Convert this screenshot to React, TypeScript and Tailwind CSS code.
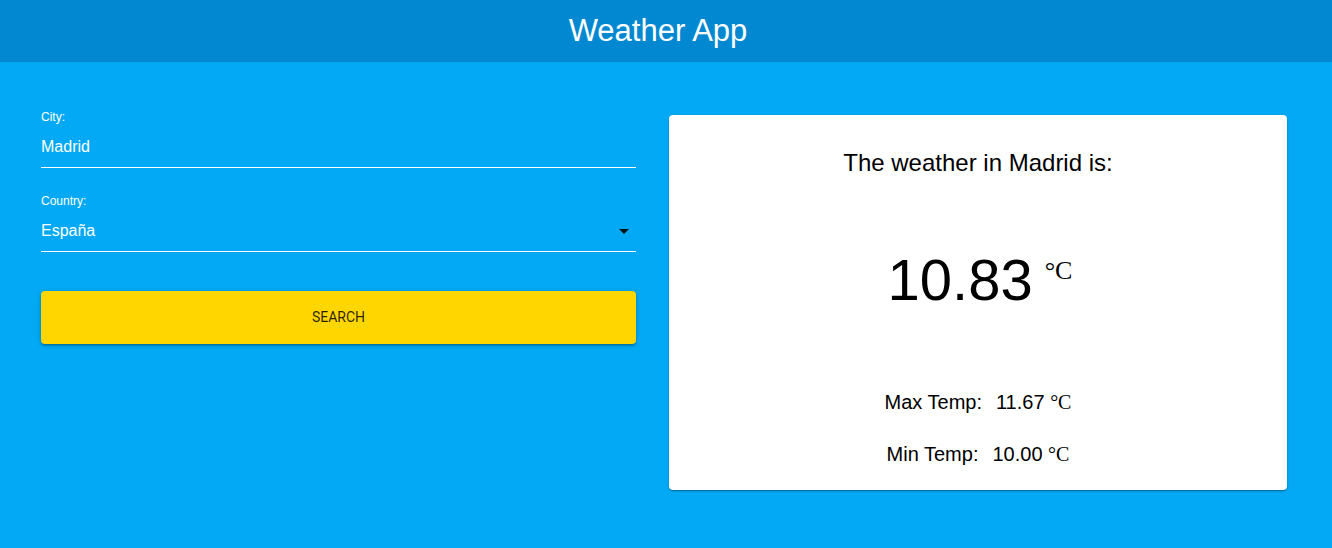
import React from 'react';

const sans = "font-['Liberation_Sans',Arial,sans-serif]";
const serif = "font-['Liberation_Serif','Times_New_Roman',serif]";

function Field({
  label,
  value,
  select,
  className = '',
}: {
  label: string;
  value: string;
  select?: boolean;
  className?: string;
}) {
  return (
    <div className={className}>
      <label className="block text-[12px] leading-[12px] text-white">{label}</label>
      <div className="mt-[14px] flex items-center justify-between border-b border-white pb-[11px] text-[16px] leading-[19px] text-white">
        <span>{value}</span>
        {select && (
          <svg viewBox="0 0 24 24" className="-my-[3px] h-[24px] w-[24px] fill-black/90">
            <path d="M7 10l5 5 5-5z" />
          </svg>
        )}
      </div>
    </div>
  );
}

function TempRow({ label, value, className = '' }: { label: string; value: string; className?: string }) {
  return (
    <p className={`text-[20px] leading-[24px] text-black ${className}`}>
      {label}
      <span className="ml-[14px]">{value}</span>{' '}
      <span className={`${serif} text-[20px] leading-[24px]`}>°C</span>
    </p>
  );
}

export default function App() {
  return (
    <div className={`min-h-[548px] bg-[#03a9f4] ${sans}`}>
      <header className="flex h-[62px] items-center justify-center bg-[#0288d1] pr-[16px]">
        <h1 className="text-[31px] leading-[36px] text-white">Weather App</h1>
      </header>

      <main className="grid grid-cols-[595px_618px] items-start gap-[33px] pl-[41px] pt-[49px]">
        <form className="flex flex-col">
          <Field label="City:" value="Madrid" />
          <Field label="Country:" value="España" select className="mt-[27px]" />
          <button
            type="button"
            className="mt-[39px] h-[53px] rounded-[4px] bg-[#ffd600] font-['Roboto',sans-serif] text-[14px] uppercase text-black/85 shadow-[0_1px_5px_0_rgba(0,0,0,0.2),0_2px_2px_0_rgba(0,0,0,0.14),0_3px_1px_-2px_rgba(0,0,0,0.12)]"
          >
            Search
          </button>
        </form>

        <section className="mt-[4px] flex flex-col items-center rounded-[4px] bg-white pb-[24px] pt-[34px] shadow-[0_1px_3px_0_rgba(0,0,0,0.2),0_1px_1px_0_rgba(0,0,0,0.14),0_2px_1px_-1px_rgba(0,0,0,0.12)]">
          <h2 className="text-[24px] leading-[28px] text-black">The weather in Madrid is:</h2>
          <div className="mt-[74px] flex items-start pl-[4px]">
            <span className="text-[58px] leading-[58px] text-black">10.83</span>
            <span className={`ml-[12px] mt-[5px] ${serif} text-[26px] leading-[30px] text-black`}>°C</span>
          </div>
          <TempRow label="Max Temp:" value="11.67" className="mt-[81px]" />
          <TempRow label="Min Temp:" value="10.00" className="mt-[28px]" />
        </section>
      </main>
    </div>
  );
}
